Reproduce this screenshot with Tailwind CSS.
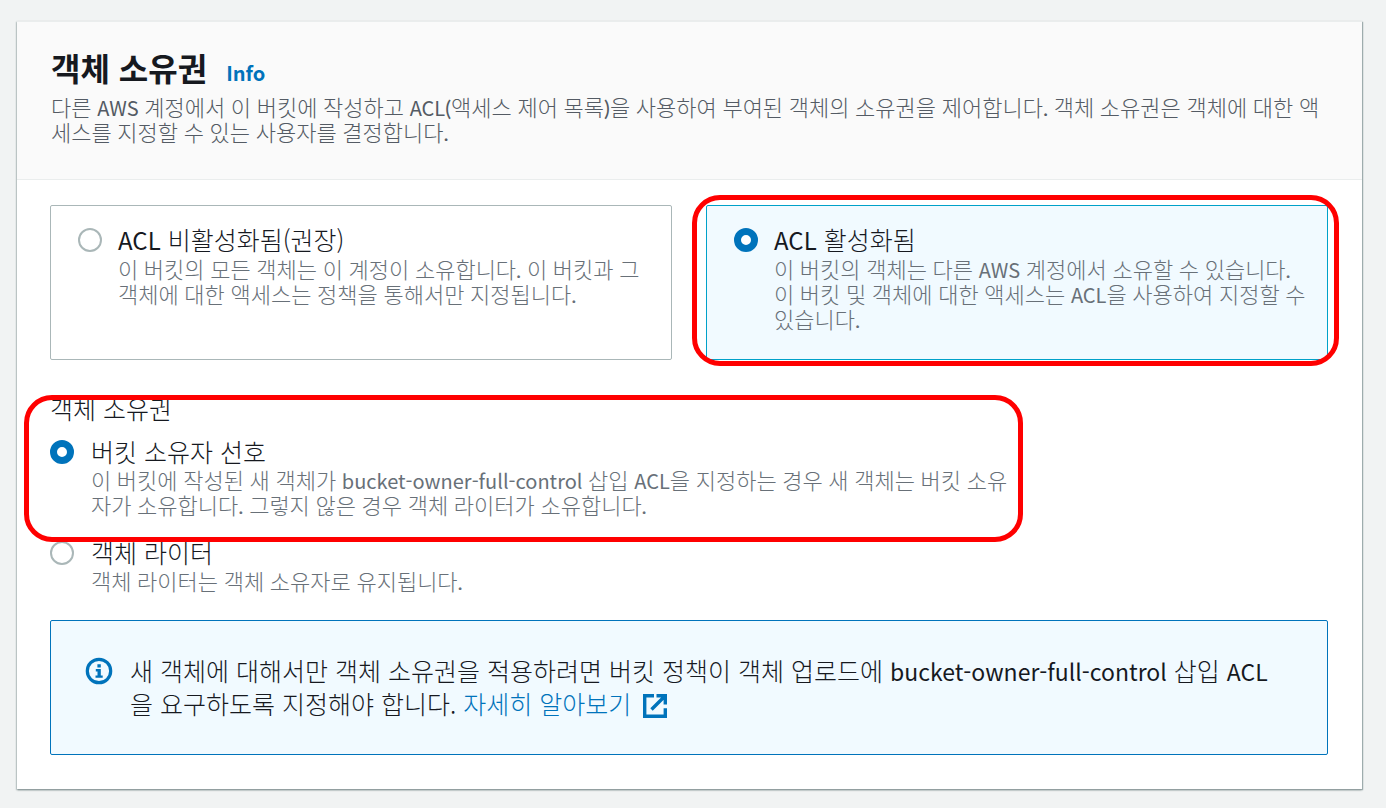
<!DOCTYPE html>
<html lang="ko">
<head>
  <meta charset="UTF-8">
  <meta name="viewport" content="width=device-width, initial-scale=1.0">
  <title>객체 소유권</title>
  <script src="https://cdn.jsdelivr.net/npm/@tailwindcss/browser@4"></script>
</head>
<body class="bg-[#f1f3f3] font-['Noto_Sans_CJK_KR_Light','Noto_Sans_CJK_KR',sans-serif] text-[#16191f]">
  <main class="mx-4 pt-[21px] pb-4">
    <section class="bg-white ml-px mr-2 border-t border-[#eaeded] shadow-[0_1px_2px_0_#879596,1px_1px_1px_0_#aab7b8,-1px_1px_1px_0_#d5dbdb]">
      <!-- Header -->
      <header class="bg-[#fafafa] border-b border-[#eaeded] px-[34px] pt-[25px] pb-[34px]">
        <div class="flex items-baseline gap-[19px] font-['Noto_Sans_CJK_KR',sans-serif]">
          <h2 class="text-[32px] leading-10 font-bold">객체 소유권</h2>
          <a href="#" class="text-[20px] leading-6 font-bold text-[#0073bb]">Info</a>
        </div>
        <p class="mt-2 text-[22px] leading-[25px] font-['Lato','Noto_Sans_CJK_KR_Light','Noto_Sans_CJK_KR',sans-serif] text-[#545b64]">다른 <span class="font-['Noto_Sans_CJK_KR'] text-[20px] leading-none">AWS</span> 계정에서 이 버킷에 작성하고 <span class="font-['Noto_Sans_CJK_KR'] text-[20px] leading-none">ACL</span>(액세스 제어 목록)을 사용하여 부여된 객체의 소유권을 제어합니다. 객체 소유권은 객체에 대한 액세스를 지정할 수 있는 사용자를 결정합니다.</p>
      </header>

      <div class="pl-[33px] pr-[34px] pt-[25px] pb-[34px]">
        <!-- ACL tiles -->
        <div class="grid grid-cols-2 gap-[34px]">
          <div class="flex items-start gap-4 border border-[#aab7b8] rounded-xs pl-[27px] pr-5 pt-[19px] pb-[27px]">
            <input type="radio" name="acl" id="aclOff" class="appearance-none shrink-0 size-6 mt-[3px] rounded-full border-2 border-[#aab7b8] bg-white checked:border-7 checked:border-[#0073bb]">
            <label for="aclOff" class="block">
              <span class="block text-[25px] leading-7"><span class="font-['Noto_Sans_CJK_KR'] text-[24px] leading-none">ACL</span> 비활성화됨(권장)</span>
              <span class="block mt-1 text-[22px] leading-[25px] font-['Lato','Noto_Sans_CJK_KR_Light','Noto_Sans_CJK_KR',sans-serif] text-[#687078]">이 버킷의 모든 객체는 이 계정이 소유합니다. 이 버킷과 그 객체에 대한 액세스는 정책을 통해서만 지정됩니다.</span>
            </label>
          </div>
          <div class="relative flex items-start gap-4 border border-[#00a1c9] bg-[#f1faff] rounded-xs pl-[27px] pr-5 pt-[19px] pb-[27px]">
            <input type="radio" name="acl" id="aclOn" checked class="appearance-none shrink-0 size-6 mt-[3px] rounded-full border-2 border-[#aab7b8] bg-white checked:border-7 checked:border-[#0073bb]">
            <label for="aclOn" class="block">
              <span class="block text-[25px] leading-7"><span class="font-['Noto_Sans_CJK_KR'] text-[24px] leading-none">ACL</span> 활성화됨</span>
              <span class="block mt-1 text-[22px] leading-[25px] font-['Lato','Noto_Sans_CJK_KR_Light','Noto_Sans_CJK_KR',sans-serif] text-[#687078]">이 버킷의 객체는 다른 <span class="font-['Noto_Sans_CJK_KR'] text-[20px] leading-none">AWS</span> 계정에서 소유할 수 있습니다. 이 버킷 및 객체에 대한 액세스는 <span class="font-['Noto_Sans_CJK_KR'] text-[20px] leading-none">ACL</span>을 사용하여 지정할 수 있습니다.</span>
            </label>
            <div class="absolute -left-[15px] -right-3 -top-[11px] -bottom-[7px] border-5 border-[#ff0000] rounded-[28px] pointer-events-none"></div>
          </div>
        </div>

        <!-- Object ownership -->
        <div class="mt-[34px] max-w-[961px]" role="radiogroup" aria-labelledby="ownershipLabel">
          <div class="relative">
            <h3 id="ownershipLabel" class="text-[25px] leading-7">객체 소유권</h3>
            <div class="mt-[15px] flex items-start gap-[17px]">
              <input type="radio" name="ownership" id="ownerPreferred" checked class="appearance-none shrink-0 size-6 mt-[3px] rounded-full border-2 border-[#aab7b8] bg-white checked:border-7 checked:border-[#0073bb]">
              <label for="ownerPreferred" class="block">
                <span class="block text-[25px] leading-7">버킷 소유자 선호</span>
                <span class="block mt-[3px] text-[22px] leading-[25px] font-['Lato','Noto_Sans_CJK_KR_Light','Noto_Sans_CJK_KR',sans-serif] text-[#687078]">이 버킷에 작성된 새 객체가 <span class="font-['Noto_Sans_CJK_KR'] text-[20px] leading-none">bucket-owner-full-control</span> 삽입 <span class="font-['Noto_Sans_CJK_KR'] text-[20px] leading-none">ACL</span>을 지정하는 경우 새 객체는 버킷 소유자가 소유합니다. 그렇지 않은 경우 객체 라이터가 소유합니다.</span>
              </label>
            </div>
            <div class="absolute z-10 -left-[26px] -right-3 top-px -bottom-6 border-5 border-[#ff0000] rounded-[28px] pointer-events-none"></div>
          </div>
          <div class="mt-5 flex items-start gap-[17px]">
            <input type="radio" name="ownership" id="objectWriter" class="appearance-none shrink-0 size-6 mt-[3px] rounded-full border-2 border-[#aab7b8] bg-white checked:border-7 checked:border-[#0073bb]">
            <label for="objectWriter" class="block">
              <span class="block text-[25px] leading-7">객체 라이터</span>
              <span class="block mt-[3px] text-[22px] leading-[25px] font-['Lato','Noto_Sans_CJK_KR_Light','Noto_Sans_CJK_KR',sans-serif] text-[#687078]">객체 라이터는 객체 소유자로 유지됩니다.</span>
            </label>
          </div>
        </div>

        <!-- Info alert -->
        <div class="mt-[26px] flex items-start gap-[17px] border border-[#0073bb] bg-[#f1faff] rounded-xs pl-[34px] pr-10 pt-[33px] pb-[34px]">
          <svg class="shrink-0 size-7 mt-[3px]" viewBox="0 0 28 28" fill="none">
            <circle cx="14" cy="14" r="11.7" stroke="#0073bb" stroke-width="3.2"/>
            <path d="M12.4 7.2h3.4v3.2h-3.4zM10.8 12h5v6.4h1.9v2.4h-7.2v-2.4h2v-4h-1.7z" fill="#0073bb"/>
          </svg>
          <p class="text-[25px] leading-[33px]">새 객체에 대해서만 객체 소유권을 적용하려면 버킷 정책이 객체 업로드에 <span class="font-['Noto_Sans_CJK_KR'] text-[23px] leading-none">bucket-owner-full-control</span> 삽입 <span class="font-['Noto_Sans_CJK_KR'] text-[23px] leading-none">ACL</span>을 요구하도록 지정해야 합니다. <a href="#" class="text-[#0073bb]">자세히 알아보기
            <svg class="inline size-[26px] ml-1 align-[-5px]" viewBox="0 0 26 26" fill="none" stroke="#0073bb" stroke-width="3.4">
              <path d="M12 2.7H2.7v20.6h20.6v-8M14.5 2.7h8.8v8.8M23 3 9.5 16.5"/>
            </svg></a></p>
        </div>
      </div>
    </section>
  </main>
</body>
</html>
